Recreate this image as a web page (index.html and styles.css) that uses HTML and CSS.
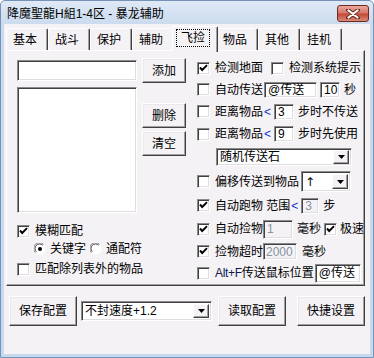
FILE: index.html
```html
<!DOCTYPE html>
<html>
<head>
<meta charset="utf-8">
<link rel="stylesheet" href="styles.css">
</head>
<body>
<div class="window">
  <div class="titlebar">
    <span class="title">降魔聖龍H組1-4区 - 暴龙辅助</span>
    <span class="close"><svg width="16" height="10" viewBox="0 0 16 10"><path d="M3 1 L13 9 M13 1 L3 9" stroke="#6b2a22" stroke-width="4" stroke-linecap="round"/><path d="M3.5 1.5 L12.5 8.5 M12.5 1.5 L3.5 8.5" stroke="#fff" stroke-width="2.2" stroke-linecap="round"/></svg></span>
  </div>
  <div class="client">
    <div class="tabs">
      <div class="tab">基本</div>
      <div class="tab">战斗</div>
      <div class="tab">保护</div>
      <div class="tab">辅助</div>
      <div class="tab active"><span class="focus">飞捡</span></div>
      <div class="tab">物品</div>
      <div class="tab">其他</div>
      <div class="tab">挂机</div>
    </div>
    <div class="panel">
      <div class="left">
        <div class="row-a">
          <div class="edit name-edit"></div>
          <div class="btn add-btn">添加</div>
        </div>
        <div class="row-b">
          <div class="edit listbox"></div>
          <div class="btncol">
            <div class="btn side-btn">删除</div>
            <div class="btn side-btn">清空</div>
          </div>
        </div>
        <div class="chk fuzzy"><span class="cb"><svg width="11" height="11" viewBox="0 0 11 11"><path d="M2 4.5 L4.2 7 L9 2.2" fill="none" stroke="#000" stroke-width="1.9"/></svg></span>模糊匹配</div>
        <div class="radios">
          <span class="rb"><svg width="12" height="12" viewBox="0 0 12 12"><circle cx="6" cy="6" r="5.5" fill="#fff"/><path d="M1.3 9.5 A5.5 5.5 0 0 1 9.5 1.3" fill="none" stroke="#8a8a8a" stroke-width="1"/><path d="M2.3 8.7 A4.5 4.5 0 0 1 8.7 2.3" fill="none" stroke="#404040" stroke-width="1"/><circle cx="6" cy="6" r="2" fill="#000"/></svg></span>
          <span class="rtxt">关键字</span>
          <span class="rb"><svg width="12" height="12" viewBox="0 0 12 12"><circle cx="6" cy="6" r="5.5" fill="#fff"/><path d="M1.3 9.5 A5.5 5.5 0 0 1 9.5 1.3" fill="none" stroke="#8a8a8a" stroke-width="1"/><path d="M2.3 8.7 A4.5 4.5 0 0 1 8.7 2.3" fill="none" stroke="#404040" stroke-width="1"/></svg></span>
          <span class="rtxt">通配符</span>
        </div>
        <div class="chk exclude"><span class="cb"></span>匹配除列表外的物品</div>
      </div>
      <div class="right">
        <div class="r r1"><span class="cb"><svg width="11" height="11" viewBox="0 0 11 11"><path d="M2 4.5 L4.2 7 L9 2.2" fill="none" stroke="#000" stroke-width="1.9"/></svg></span><span class="t">检测地面</span><span class="cb cb-mid"></span><span class="t">检测系统提示</span></div>
        <div class="r r2"><span class="cb"></span><span class="t">自动传送</span><span class="edit e-tele">@传送</span><span class="edit e-sec">10</span><span class="t after">秒</span></div>
        <div class="r r3"><span class="cb"></span><span class="t">距离物品</span><span class="lt">&lt;</span><span class="edit e-step">3</span><span class="t after">步时不传送</span></div>
        <div class="r r4"><span class="cb"></span><span class="t">距离物品</span><span class="lt">&lt;</span><span class="edit e-step">9</span><span class="t after">步时先使用</span></div>
        <div class="r r5"><span class="combo c-stone"><span class="ctext">随机传送石</span><span class="dd"><svg width="7" height="4" viewBox="0 0 7 4"><path d="M0 0 H7 L3.5 4 Z" fill="#000"/></svg></span></span></div>
        <div class="r r6"><span class="cb"></span><span class="t">偏移传送到物品</span><span class="combo c-dir"><span class="ctext arrow">↑</span><span class="dd"><svg width="7" height="4" viewBox="0 0 7 4"><path d="M0 0 H7 L3.5 4 Z" fill="#000"/></svg></span></span></div>
        <div class="r r7"><span class="cb"><svg width="11" height="11" viewBox="0 0 11 11"><path d="M2 4.5 L4.2 7 L9 2.2" fill="none" stroke="#000" stroke-width="1.9"/></svg></span><span class="t">自动跑物 范围</span><span class="lt">&lt;</span><span class="edit dis e-range">3</span><span class="t after">步</span></div>
        <div class="r r8"><span class="cb"><svg width="11" height="11" viewBox="0 0 11 11"><path d="M2 4.5 L4.2 7 L9 2.2" fill="none" stroke="#000" stroke-width="1.9"/></svg></span><span class="t">自动捡物</span><span class="edit dis e-ms">1</span><span class="t after">毫秒</span><span class="cb cb-fast"><svg width="11" height="11" viewBox="0 0 11 11"><path d="M2 4.5 L4.2 7 L9 2.2" fill="none" stroke="#000" stroke-width="1.9"/></svg></span><span class="t fast">极速</span></div>
        <div class="r r9"><span class="cb"><svg width="11" height="11" viewBox="0 0 11 11"><path d="M2 4.5 L4.2 7 L9 2.2" fill="none" stroke="#000" stroke-width="1.9"/></svg></span><span class="t">捡物超时</span><span class="edit dis e-timeout">2000</span><span class="t">毫秒</span></div>
        <div class="r r10"><span class="cb"></span><span class="t"><span class="alt">Alt+F</span>传送鼠标位置</span><span class="edit e-mouse">@传送</span></div>
      </div>
    </div>
    <div class="bottom">
      <div class="btn big-btn">保存配置</div>
      <span class="combo c-speed"><span class="ctext">不封速度+1.2</span><span class="dd"><svg width="7" height="4" viewBox="0 0 7 4"><path d="M0 0 H7 L3.5 4 Z" fill="#000"/></svg></span></span>
      <div class="btn big-btn read-btn">读取配置</div>
      <div class="btn big-btn quick-btn">快捷设置</div>
    </div>
  </div>
</div>
</body>
</html>
```

FILE: styles.css
```css
* { box-sizing: border-box; }
html, body { margin: 0; padding: 0; }
body {
  width: 374px;
  height: 358px;
  overflow: hidden;
  background: #ffffff;
  font: 12px/14px "Liberation Sans", "Noto Sans CJK SC", sans-serif;
  color: #000;
}
.window {
  width: 374px;
  height: 358px;
  border: 1px solid #7592b8;
  border-radius: 5px 5px 0 0;
  background: linear-gradient(#dfe9f6, #cbdaee 24px, #c7d9ef);
  padding: 0 3px 3px 3px;
  display: flex;
  flex-direction: column;
}
.titlebar {
  height: 23px;
  display: flex;
  align-items: flex-start;
}
.title {
  padding: 7px 0 0 3px;
  font-size: 12px;
  line-height: 13px;
}
.close {
  margin: 4px 1px 0 auto;
  width: 32px;
  height: 17px;
  border: 1px solid #6d2a22;
  border-radius: 3px;
  background: linear-gradient(#e9a99c, #d8786a 45%, #c54a3a 55%, #d98a78);
  display: flex;
  align-items: center;
  justify-content: center;
}
.client {
  flex: 1;
  background: #f5f2f6;
  display: flex;
  flex-direction: column;
}
.tabs {
  height: 26px;
  display: flex;
  padding: 2px 0 0 2px;
  align-items: flex-start;
  position: relative;
  z-index: 1;
}
.tab {
  width: 42px;
  height: 22px;
  margin-top: 2px;
  padding: 4px 0 0 6px;
  border-top: 1px solid #ffffff;
  border-left: 1px solid #ffffff;
  border-right: 1px solid #404040;
  box-shadow: inset -1px 0 0 #a0a0a0;
  border-radius: 2px 2px 0 0;
  background: #f5f2f6;
}
.tab.active {
  width: 46px;
  height: 26px;
  margin: 0 -2px 0 -2px;
  padding: 2px 0 0 3px;
  position: relative;
}
.focus {
  display: inline-block;
  border: 1px dotted #000;
  padding: 1px 4px 1px 4px;
  line-height: 14px;
}
.panel {
  height: 236px;
  margin: 0 5px 0 2px;
  border: 1px solid;
  border-color: #ffffff #404040 #404040 #ffffff;
  box-shadow: inset -1px -1px 0 #a0a0a0;
  padding: 6px 0 0 10px;
  display: flex;
  gap: 11px;
}
.left { width: 169px; display: flex; flex-direction: column; }
.right { flex: 1; display: flex; flex-direction: column; }

.edit {
  display: inline-flex;
  align-items: center;
  background: #fff;
  border: 1px solid;
  border-color: #8a8a8a #ffffff #ffffff #8a8a8a;
  box-shadow: inset 1px 1px 0 #404040, inset -1px -1px 0 #e0dde0;
  padding: 0 0 0 3px;
  font-size: 12px;
}
.edit.dis { background: #f5f2f6; color: #8593a3; }
.btn {
  display: flex;
  align-items: center;
  justify-content: center;
  background: #f5f2f6;
  border: 1px solid;
  border-color: #ffffff #404040 #404040 #ffffff;
  box-shadow: inset -1px -1px 0 #a0a0a0, inset 1px 1px 0 #ebe8ec;
}
.row-a { display: flex; align-items: flex-start; gap: 5px; }
.name-edit { width: 120px; height: 21px; margin-top: 3px; }
.add-btn { width: 44px; height: 25px; margin-top: 1px; }
.row-b { display: flex; align-items: flex-start; gap: 5px; margin-top: 4px; }
.listbox { width: 120px; height: 126px; }
.btncol { display: flex; flex-direction: column; gap: 3px; padding-top: 16px; }
.side-btn { width: 44px; height: 25px; }

.chk { display: flex; align-items: center; height: 18px; gap: 5px; }
.fuzzy { margin-top: 9px; }
.exclude { margin-top: 2px; }
.cb {
  width: 13px;
  height: 13px;
  flex: none;
  background: #fff;
  border: 1px solid;
  border-color: #8a8a8a #ffffff #ffffff #8a8a8a;
  box-shadow: inset 1px 1px 0 #404040, inset -1px -1px 0 #e0dde0;
  display: inline-flex;
  align-items: center;
  justify-content: center;
}
.radios { display: flex; align-items: center; height: 18px; padding-left: 17px; }
.rb { width: 12px; height: 12px; display: inline-flex; }
.rtxt { margin: 0 4px 0 4px; }

.r { display: flex; align-items: center; white-space: nowrap; }
.r .t { margin-left: 5px; }
.r .t.after { margin-left: 4px; }
.r1 { height: 22px; }
.r2 { height: 21px; }
.r3 { height: 23px; }
.r4 { height: 22px; }
.r5 { height: 24px; }
.r6 { height: 25px; }
.r7 { height: 23px; }
.r8 { height: 24px; }
.r9 { height: 21px; }
.r10 { height: 22px; }
.cb-mid { margin-left: 8px; }
.e-tele { width: 53px; height: 16px; margin-left: 1px; }
.e-sec { width: 20px; height: 16px; margin-left: 3px; }
.lt { color: #1030d0; margin-left: 1px; }
.e-step { width: 20px; height: 16px; margin-left: 3px; }
.combo {
  display: inline-flex;
  align-items: center;
  background: #fff;
  border: 1px solid;
  border-color: #8a8a8a #ffffff #ffffff #8a8a8a;
  box-shadow: inset 1px 1px 0 #404040, inset -1px -1px 0 #e0dde0;
  padding: 2px 2px 2px 3px;
}
.ctext { flex: 1; }
.dd {
  width: 16px;
  height: 100%;
  display: flex;
  align-items: center;
  justify-content: center;
  background: #f5f2f6;
  border: 1px solid;
  border-color: #ffffff #404040 #404040 #ffffff;
  box-shadow: inset -1px -1px 0 #a0a0a0;
}
.c-stone { width: 136px; height: 18px; margin-left: 19px; padding-top: 1px; padding-bottom: 1px; }
.c-dir { width: 50px; height: 21px; margin-left: 2px; }
.arrow { font-family: "DejaVu Sans", sans-serif; font-size: 12px; }
.e-range { width: 18px; height: 16px; margin-left: 3px; }
.e-ms { width: 30px; height: 19px; margin-left: 0; }
.cb-fast { margin-left: 3px; }
.r .t.fast { margin-left: 3px; }
.e-timeout { width: 34px; height: 17px; margin-left: 0; padding-left: 2px; }
.alt { color: #101a50; letter-spacing: -0.3px; }
.e-mouse { width: 46px; height: 19px; margin-left: 1px; }

.bottom {
  display: flex;
  align-items: center;
  padding: 10px 0 0 5px;
}
.big-btn { width: 68px; height: 30px; }
.c-speed { width: 131px; height: 20px; margin-left: 4px; }
.read-btn { margin-left: 6px; }
.quick-btn { margin-left: 11px; }
```
